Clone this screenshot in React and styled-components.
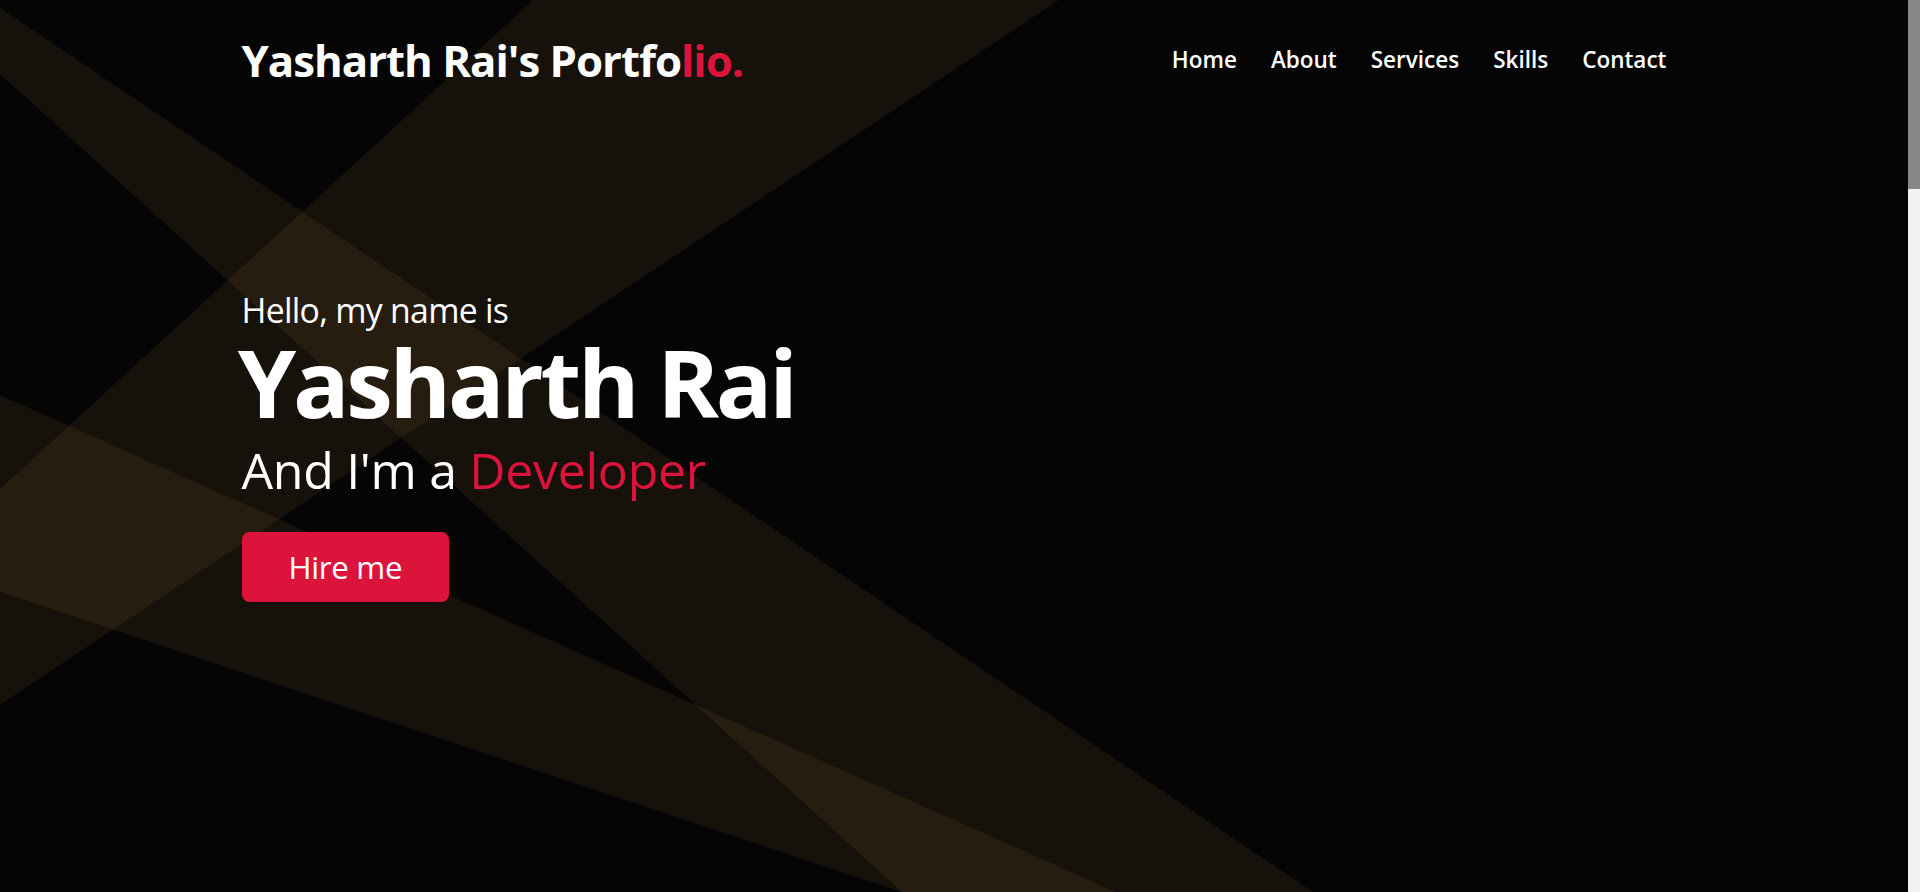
import React from 'react'
import styled, { createGlobalStyle } from 'styled-components'

const FONT = `"Open Sans", "Noto Sans", "DejaVu Sans", sans-serif`
const CRIMSON = '#dc143c'

const GlobalStyle = createGlobalStyle`
html, body {
  margin: 0;
  padding: 0;
  height: 100%;
  overflow: hidden;
}
body {
  background: #050505;
  font-family: ${FONT};
}
*, *::before, *::after {
  box-sizing: border-box;
}
`

const Frame = styled.div`
display: flex;
height: 100vh;
`

const Page = styled.div`
position: relative;
flex: 1;
min-width: 0;
overflow-y: auto;
scrollbar-width: none;

&::-webkit-scrollbar {
  display: none;
}
`

const ScrollRail = styled.div`
flex-shrink: 0;
width: 12px;
background: #f1f1f1;
`

const ScrollThumb = styled.div`
height: 189px;
background: #888;
`

const MaxWidth = styled.div`
max-width: 1625px;
padding: 0 100px;
margin: 0 auto;
`

const Navbar = styled.nav`
position: absolute;
top: 0;
left: 0;
right: 0;
z-index: 999;
padding: 37.5px 0;
`

const NavInner = styled(MaxWidth)`
display: flex;
align-items: center;
justify-content: space-between;
`

const Logo = styled.a`
color: #fff;
font-size: 43.75px;
font-weight: 700;
line-height: 44px;
letter-spacing: -1px;
text-decoration: none;

span {
  color: ${CRIMSON};
}
`

const Menu = styled.ul`
display: flex;
margin: 0;
padding: 0;
list-style: none;
`

const MenuLink = styled.a`
display: block;
color: #fff;
font-size: 22.5px;
font-weight: 600;
line-height: 26px;
margin-left: 34px;
text-decoration: none;
`

const Home = styled.section`
position: relative;
display: flex;
align-items: center;
height: 100vh;
min-height: 625px;
background: #050505;
color: #fff;
overflow: hidden;
`

const Beams = styled.svg`
position: absolute;
top: 0;
left: 0;
width: 100%;
height: 100%;
`

const HomeInner = styled(MaxWidth)`
position: relative;
width: 100%;
`

const HomeContent = styled.div`
display: flex;
flex-direction: column;
align-items: flex-start;
`

const Text1 = styled.div`
font-size: 33.75px;
line-height: 40px;
letter-spacing: -0.7px;
`

const Text2 = styled.div`
font-size: 93.75px;
font-weight: 700;
line-height: 104px;
letter-spacing: -3.3px;
margin-left: -3.75px;
`

const Text3 = styled.div`
font-size: 50px;
line-height: 60px;
letter-spacing: -0.3px;
margin: 6px 0;

span {
  color: ${CRIMSON};
  font-weight: 500;
}
`

const HireButton = styled.a`
display: inline-block;
margin-top: 26px;
padding: 15px 45px;
background: ${CRIMSON};
border: 2.5px solid ${CRIMSON};
border-radius: 7.5px;
color: #fff;
font-size: 31.25px;
line-height: 36px;
letter-spacing: -0.3px;
text-decoration: none;
`

const Section = styled.section`
min-height: ${p => p.h}px;
padding: 125px 0;
background: ${p => (p.dark ? '#111' : '#fff')};
color: ${p => (p.dark ? '#fff' : '#111')};
`

const Title = styled.h2`
margin: 0 0 75px;
text-align: center;
font-size: 50px;
font-weight: 500;
`

const Paragraph = styled.p`
margin: 0 auto;
max-width: 1000px;
font-size: 22px;
line-height: 1.6;
text-align: center;
`

const Cards = styled.div`
display: grid;
grid-template-columns: repeat(3, 1fr);
gap: 30px;
`

const Card = styled.div`
padding: 60px 30px;
border-radius: 8px;
background: #222;
text-align: center;
font-size: 22px;

h3 {
  margin: 0 0 15px;
  font-size: 30px;
  font-weight: 500;
}
`

const SkillRow = styled.div`
margin: 0 auto 30px;
max-width: 900px;
font-size: 20px;
`

const Bar = styled.div`
height: 6px;
margin-top: 8px;
background: lightgrey;

div {
  height: 100%;
  background: ${CRIMSON};
}
`

const Footer = styled.footer`
min-height: 90px;
padding: 25px 0;
background: #111;
color: #fff;
text-align: center;
font-size: 20px;

span {
  color: ${CRIMSON};
}
`

const navItems = ['Home', 'About', 'Services', 'Skills', 'Contact']

const services = [
  { title: 'Web Design', text: 'Clean, responsive layouts for any screen.' },
  { title: 'Advertising', text: 'Campaigns that reach the right people.' },
  { title: 'Apps Design', text: 'Simple, friendly mobile interfaces.' },
]

const skills = [
  { name: 'HTML', level: 90 },
  { name: 'CSS', level: 60 },
  { name: 'JavaScript', level: 80 },
  { name: 'PHP', level: 50 },
  { name: 'MySQL', level: 70 },
]

// light beams of the banner, in the 1908x892 hero space
const beams = [
  '0,8 1313,892 902,892 0,74',
  '533,0 1059,0 0,705 0,489',
  '0,395 1116,892 902,892 0,592',
]

const App = () => (
  <Frame>
    <GlobalStyle />
    <Page>
      <Navbar>
        <NavInner>
          <Logo href="#">Yasharth Rai's Portfo<span>lio.</span></Logo>
          <Menu>
            {navItems.map(item => (
              <li key={item}>
                <MenuLink href={`#${item.toLowerCase()}`}>{item}</MenuLink>
              </li>
            ))}
          </Menu>
        </NavInner>
      </Navbar>

      <Home id="home">
        <Beams viewBox="0 0 1908 892" preserveAspectRatio="none">
          {beams.map(points => (
            <polygon key={points} points={points} fill="rgba(205,155,67,0.085)" />
          ))}
        </Beams>
        <HomeInner>
          <HomeContent>
            <Text1>Hello, my name is</Text1>
            <Text2>Yasharth Rai</Text2>
            <Text3>And I'm a <span>Developer</span></Text3>
            <HireButton href="#contact">Hire me</HireButton>
          </HomeContent>
        </HomeInner>
      </Home>

      <Section id="about" h={880}>
        <MaxWidth>
          <Title>About me</Title>
          <Paragraph>
            I'm Yasharth and I'm a Developer. I build websites and web apps that are fast, tidy and easy to use.
          </Paragraph>
        </MaxWidth>
      </Section>

      <Section id="services" h={880} dark>
        <MaxWidth>
          <Title>My services</Title>
          <Cards>
            {services.map(s => (
              <Card key={s.title}>
                <h3>{s.title}</h3>
                {s.text}
              </Card>
            ))}
          </Cards>
        </MaxWidth>
      </Section>

      <Section id="skills" h={820}>
        <MaxWidth>
          <Title>My skills</Title>
          {skills.map(s => (
            <SkillRow key={s.name}>
              {s.name} {s.level}%
              <Bar><div style={{ width: `${s.level}%` }} /></Bar>
            </SkillRow>
          ))}
        </MaxWidth>
      </Section>

      <Section id="contact" h={650}>
        <MaxWidth>
          <Title>Contact me</Title>
          <Paragraph>Send a message and I'll get back to you soon.</Paragraph>
        </MaxWidth>
      </Section>

      <Footer>Created By <span>Yasharth Rai</span> | All rights reserved.</Footer>
    </Page>
    <ScrollRail>
      <ScrollThumb />
    </ScrollRail>
  </Frame>
)

export default App
